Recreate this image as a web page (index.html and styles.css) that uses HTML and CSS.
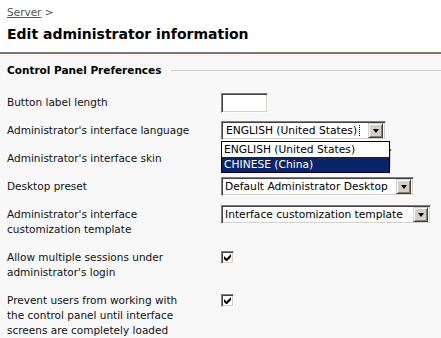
FILE: index.html
```html
<!DOCTYPE html>
<html>
<head>
<meta charset="utf-8">
<link rel="stylesheet" href="styles.css">
</head>
<body>
<div class="header">
  <div class="crumb"><a href="#">Server</a> &gt;</div>
  <h1 class="title">Edit administrator information</h1>
</div>
<div class="section">
  <div class="section-title"><span>Control Panel Preferences</span><span class="rule"></span></div>
  <div class="form">
    <div class="row">
      <div class="label">Button label length</div>
      <div class="ctl"><div class="textbox"></div></div>
    </div>
    <div class="row">
      <div class="label">Administrator's interface language</div>
      <div class="ctl">
        <div class="select w-lang focused"><span class="value"><span class="focus">ENGLISH (United States)</span></span><span class="btn"><span class="tri"></span></span></div>
        <div class="dropdown">
          <div class="opt">ENGLISH (United States)</div>
          <div class="opt sel">CHINESE (China)</div>
        </div>
      </div>
    </div>
    <div class="row">
      <div class="label">Administrator's interface skin</div>
      <div class="ctl"><div class="select w-skin"><span class="value"></span><span class="btn"><span class="tri"></span></span></div></div>
    </div>
    <div class="row">
      <div class="label">Desktop preset</div>
      <div class="ctl"><div class="select w-desk"><span class="value">Default Administrator Desktop</span><span class="btn"><span class="tri"></span></span></div></div>
    </div>
    <div class="row">
      <div class="label">Administrator's interface<br>customization template</div>
      <div class="ctl"><div class="select w-tpl"><span class="value">Interface customization template</span><span class="btn"><span class="tri"></span></span></div></div>
    </div>
    <div class="row">
      <div class="label">Allow multiple sessions under<br>administrator's login</div>
      <div class="ctl"><span class="check"><svg width="9" height="9" viewBox="0 0 9 9"><path d="M1 3v3l2 2h1l4-4V1L3.5 5.5Z" fill="#000"/></svg></span></div>
    </div>
    <div class="row">
      <div class="label">Prevent users from working with<br>the control panel until interface<br>screens are completely loaded</div>
      <div class="ctl"><span class="check"><svg width="9" height="9" viewBox="0 0 9 9"><path d="M1 3v3l2 2h1l4-4V1L3.5 5.5Z" fill="#000"/></svg></span></div>
    </div>
  </div>
</div>
</body>
</html>
```
FILE: styles.css
```css
html, body {
  margin: 0;
  padding: 0;
  background: #f8f8f8;
  font-family: "DejaVu Sans", sans-serif;
  font-size: 10.5px;
  color: #000;
}
.header {
  background: #fff;
  padding: 5px 7px 9px;
  border-bottom: 2px solid #83766d;
}
.crumb {
  color: #555;
  line-height: 15px;
}
.crumb a {
  color: #555;
  text-decoration: underline;
}
.title {
  margin: 5px 0 0;
  font-size: 14px;
  font-weight: bold;
  line-height: 18px;
}
.section {
  padding: 9px 0 0 7px;
}
.section-title {
  display: flex;
  align-items: center;
  gap: 10px;
  font-weight: bold;
  font-size: 10.5px;
  line-height: 15px;
}
.section-title .rule {
  flex: 1;
  border-top: 1px solid #cfcfcf;
}
.form {
  display: flex;
  flex-direction: column;
  gap: 13px;
  padding-top: 17px;
}
.row {
  display: grid;
  grid-template-columns: 214px auto;
  align-items: start;
}
.label {
  line-height: 15px;
  color: #111;
}
.ctl {
  position: relative;
  height: 15px;
  font-size: 10.7px;
}
.textbox {
  width: 45px;
  height: 18px;
  margin-top: -2px;
  background: #fff;
  border-top: 1px solid #808080;
  border-left: 1px solid #808080;
  border-right: 1px solid #fff;
  border-bottom: 1px solid #fff;
  box-shadow: inset 1px 1px 0 #404040, inset -1px -1px 0 #d4d0c8;
}
.select {
  display: flex;
  align-items: center;
  box-sizing: border-box;
  height: 19px;
  margin-top: -2px;
  padding: 2px;
  background: #fff;
  border-top: 1px solid #808080;
  border-left: 1px solid #808080;
  border-right: 1px solid #fff;
  border-bottom: 1px solid #fff;
  box-shadow: inset 1px 1px 0 #404040, inset -1px -1px 0 #d4d0c8;
}
.select .value {
  flex: 1;
  padding-left: 1px;
  white-space: nowrap;
  overflow: hidden;
  line-height: 13px;
}
.focused .value .focus {
  outline: 1px dotted #000;
  padding: 0 2px;
  margin-left: -1px;
}
.select .btn {
  flex: none;
  width: 15px;
  height: 15px;
  box-sizing: border-box;
  background: #d4d0c8;
  border-top: 1px solid #d4d0c8;
  border-left: 1px solid #d4d0c8;
  border-right: 1px solid #404040;
  border-bottom: 1px solid #404040;
  box-shadow: inset 1px 1px 0 #fff, inset -1px -1px 0 #808080;
  display: flex;
  align-items: center;
  justify-content: center;
}
.tri {
  width: 0;
  height: 0;
  border-left: 3.5px solid transparent;
  border-right: 3.5px solid transparent;
  border-top: 4px solid #000;
  margin-top: 1px;
}
.w-lang { width: 165px; }
.w-skin { width: 171px; }
.w-desk { width: 193px; }
.w-tpl { width: 210px; }
.dropdown {
  position: absolute;
  left: 0;
  top: 18px;
  width: 167px;
  background: #fff;
  border: 1px solid #000;
  z-index: 2;
}
.opt {
  line-height: 15px;
  padding-left: 2px;
  white-space: nowrap;
}
.opt.sel {
  background: #0a246a;
  color: #fff;
}
.check {
  display: flex;
  align-items: center;
  justify-content: center;
  box-sizing: border-box;
  width: 13px;
  height: 13px;
  margin-top: 1px;
  background: #fff;
  border-top: 1px solid #808080;
  border-left: 1px solid #808080;
  border-right: 1px solid #fff;
  border-bottom: 1px solid #fff;
  box-shadow: inset 1px 1px 0 #404040, inset -1px -1px 0 #d4d0c8;
}
```
